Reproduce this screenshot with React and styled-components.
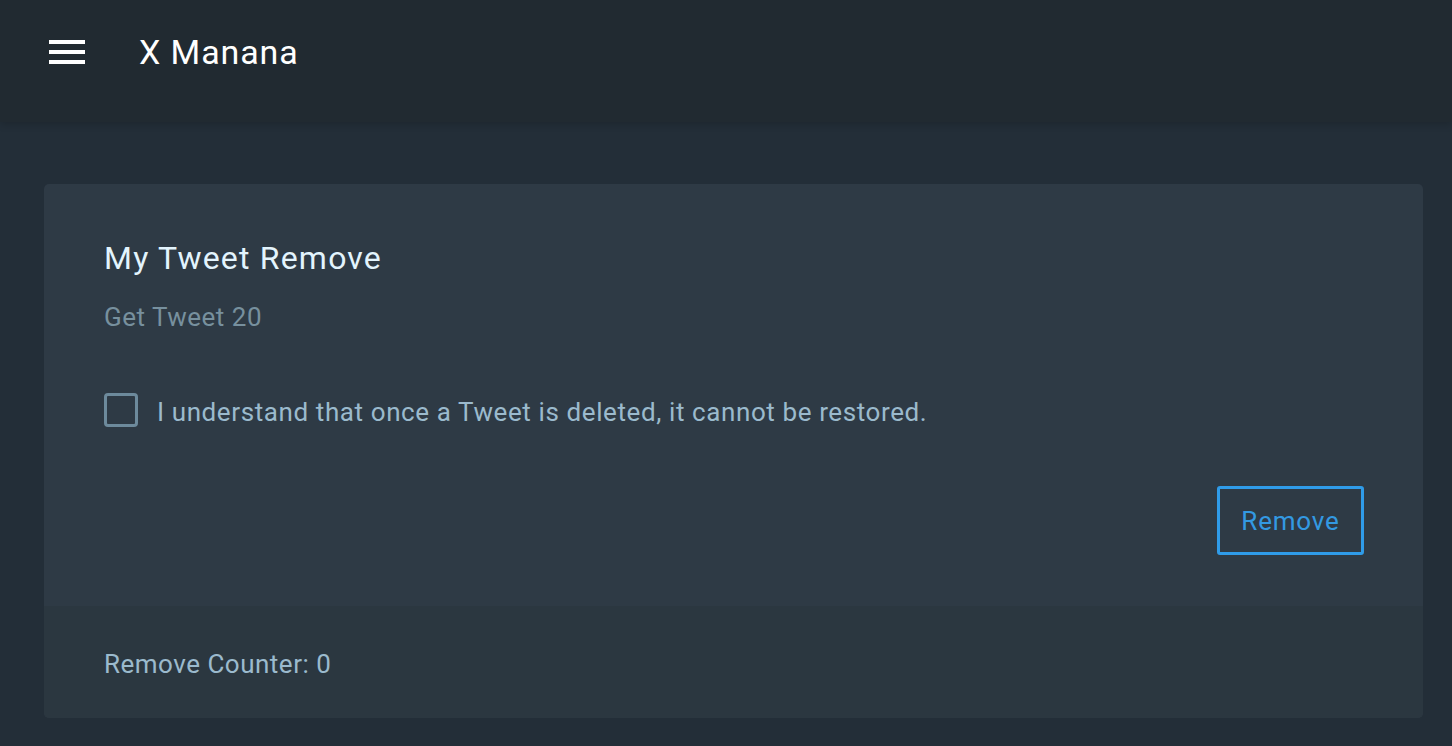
import React, { useState } from 'react';
import styled, { createGlobalStyle } from 'styled-components';

const GlobalStyle = createGlobalStyle`
  html, body {
    margin: 0;
    padding: 0;
    background: #232e38;
    font-family: Roboto, "Liberation Sans", sans-serif;
  }
`;

const Page = styled.div`
  min-height: 746px;
  background: #232e38;
`;

const TopBar = styled.header`
  height: 122px;
  display: flex;
  align-items: center;
  padding: 0 0 18px 49px;
  box-sizing: border-box;
  background: #212a31;
  box-shadow: 0 2px 8px rgba(0, 0, 0, 0.18);
  position: relative;
  z-index: 1;
`;

const MenuButton = styled.button`
  width: 36px;
  height: 24px;
  padding: 0;
  border: 0;
  background: none;
  display: flex;
  flex-direction: column;
  justify-content: space-between;
  cursor: pointer;

  span {
    display: block;
    height: 4px;
    background: #ffffff;
  }
`;

const AppTitle = styled.h1`
  margin: 0 0 0 54px;
  font-size: 34px;
  font-weight: 400;
  letter-spacing: 0.9px;
  color: #ffffff;
  line-height: 40px;
`;

const Content = styled.main`
  padding: 62px 29px 29px 44px;
`;

const Card = styled.section`
  background: #2e3a45;
  border-radius: 5px;
  overflow: hidden;
`;

const CardBody = styled.div`
  padding: 54px 59px 51px 60px;
  display: flex;
  flex-direction: column;
`;

const Title = styled.h2`
  margin: 0;
  font-size: 32px;
  font-weight: 400;
  line-height: 40px;
  letter-spacing: 1.2px;
  color: #e3f4fd;
`;

const Subtitle = styled.p`
  margin: 23px 0 0;
  font-size: 26px;
  line-height: 32px;
  letter-spacing: 0.5px;
  color: #77909e;
`;

const CheckRow = styled.label`
  margin-top: 60px;
  display: flex;
  align-items: flex-start;
  gap: 19px;
  cursor: pointer;
`;

const Box = styled.span`
  width: 34px;
  height: 34px;
  box-sizing: border-box;
  border: 3px solid #6d8a9c;
  border-radius: 4px;
  flex-shrink: 0;
  background: ${(p) => (p.$checked ? '#2f9be8' : 'transparent')};
`;

const CheckText = styled.span`
  font-size: 26px;
  line-height: 34px;
  padding-top: 2px;
  letter-spacing: 0.6px;
  color: #9bbacd;
`;

const Actions = styled.div`
  margin-top: 57px;
  display: flex;
  justify-content: flex-end;
`;

const OutlineButton = styled.button`
  width: 147px;
  height: 69px;
  box-sizing: border-box;
  border: 3px solid #2f9be8;
  border-radius: 3px;
  background: transparent;
  color: #3399e2;
  font-family: inherit;
  font-size: 26px;
  letter-spacing: 0.8px;
  cursor: pointer;
`;

const CardFooter = styled.div`
  height: 112px;
  box-sizing: border-box;
  padding: 42px 60px 0;
  background: #2b3740;
  font-size: 26px;
  line-height: 32px;
  letter-spacing: 0.5px;
  color: #9bbacd;
`;

export default function App() {
  const [agreed, setAgreed] = useState(false);
  const [count, setCount] = useState(0);

  return (
    <Page>
      <GlobalStyle />
      <TopBar>
        <MenuButton aria-label="menu">
          <span />
          <span />
          <span />
        </MenuButton>
        <AppTitle>X Manana</AppTitle>
      </TopBar>
      <Content>
        <Card>
          <CardBody>
            <Title>My Tweet Remove</Title>
            <Subtitle>Get Tweet 20</Subtitle>
            <CheckRow onClick={() => setAgreed(!agreed)}>
              <Box $checked={agreed} />
              <CheckText>I understand that once a Tweet is deleted, it cannot be restored.</CheckText>
            </CheckRow>
            <Actions>
              <OutlineButton onClick={() => agreed && setCount(count + 1)}>Remove</OutlineButton>
            </Actions>
          </CardBody>
          <CardFooter>Remove Counter: {count}</CardFooter>
        </Card>
      </Content>
    </Page>
  );
}
